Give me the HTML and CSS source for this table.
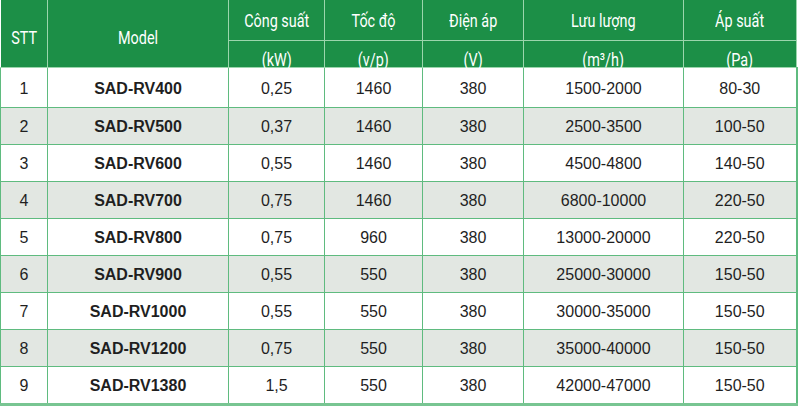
FILE: index.html
```html
<!DOCTYPE html>
<html lang="vi">
<head>
<meta charset="utf-8">
<title>Bảng thông số</title>
<link rel="stylesheet" href="styles.css">
</head>
<body>
<table class="spec">
  <colgroup>
    <col class="c-stt"><col class="c-model"><col class="c-p"><col class="c-s"><col class="c-v"><col class="c-q"><col class="c-pa">
  </colgroup>
  <thead>
    <tr class="h1">
      <th rowspan="2" class="span2"><span>STT</span></th>
      <th rowspan="2" class="span2"><span>Model</span></th>
      <th><span>Công suất</span></th>
      <th><span>Tốc độ</span></th>
      <th><span>Điện áp</span></th>
      <th><span>Lưu lượng</span></th>
      <th><span>Áp suất</span></th>
    </tr>
    <tr class="h2">
      <th><span>(kW)</span></th>
      <th><span>(v/p)</span></th>
      <th><span>(V)</span></th>
      <th><span>(m³/h)</span></th>
      <th><span>(Pa)</span></th>
    </tr>
  </thead>
  <tbody>
    <tr class="first"><td>1</td><td class="m">SAD-RV400</td><td>0,25</td><td>1460</td><td>380</td><td>1500-2000</td><td>80-30</td></tr>
    <tr class="alt"><td>2</td><td class="m">SAD-RV500</td><td>0,37</td><td>1460</td><td>380</td><td>2500-3500</td><td>100-50</td></tr>
    <tr><td>3</td><td class="m">SAD-RV600</td><td>0,55</td><td>1460</td><td>380</td><td>4500-4800</td><td>140-50</td></tr>
    <tr class="alt"><td>4</td><td class="m">SAD-RV700</td><td>0,75</td><td>1460</td><td>380</td><td>6800-10000</td><td>220-50</td></tr>
    <tr><td>5</td><td class="m">SAD-RV800</td><td>0,75</td><td>960</td><td>380</td><td>13000-20000</td><td>220-50</td></tr>
    <tr class="alt"><td>6</td><td class="m">SAD-RV900</td><td>0,55</td><td>550</td><td>380</td><td>25000-30000</td><td>150-50</td></tr>
    <tr><td>7</td><td class="m">SAD-RV1000</td><td>0,55</td><td>550</td><td>380</td><td>30000-35000</td><td>150-50</td></tr>
    <tr class="alt"><td>8</td><td class="m">SAD-RV1200</td><td>0,75</td><td>550</td><td>380</td><td>35000-40000</td><td>150-50</td></tr>
    <tr class="last"><td>9</td><td class="m">SAD-RV1380</td><td>1,5</td><td>550</td><td>380</td><td>42000-47000</td><td>150-50</td></tr>
  </tbody>
</table>
</body>
</html>
```
FILE: styles.css
```css
html, body {
  margin: 0;
  padding: 0;
  background: #ffffff;
}

.spec {
  border-collapse: collapse;
  table-layout: fixed;
  width: 796px;
  font-family: "Liberation Sans", Arial, sans-serif;
  font-size: 16px;
  color: #1f1f1f;
}

.c-stt { width: 47px; }
.c-model { width: 181px; }
.c-p { width: 96px; }
.c-s { width: 98px; }
.c-v { width: 101px; }
.c-q { width: 160px; }
.c-pa { width: 113px; }

.spec th {
  background: #1c8f47;
  color: #ffffff;
  font-family: "Roboto", "Liberation Sans", sans-serif;
  font-weight: normal;
  font-size: 18px;
  padding: 0;
  text-align: center;
  border: 1px solid #9bd5ac;
  white-space: nowrap;
}

.spec th span {
  display: inline-block;
  transform: scaleX(0.8);
}

.spec thead tr:first-child th { border-top: none; }
.spec th:first-child { border-left: none; }

.h1 th { height: 40px; }
.h1 th.span2 { padding-top: 7px; }
.h2 th {
  height: 26px;
  vertical-align: bottom;
  line-height: 15px;
}

.spec td {
  height: 34px;
  padding: 2px 0 0;
  text-align: center;
  border: 1px solid #5fbb7f;
}

.spec tr.first td { height: 37px; }

.spec td:first-child { border-left: 1px solid #5fbb7f; }
.spec td:last-child { border-right: 2px solid #5fbb7f; }
.spec tr.last td { border-bottom: 3px solid #78c592; }

.spec td.m { font-weight: bold; }

.spec tr.alt td { background: #e2e7e2; }
```
